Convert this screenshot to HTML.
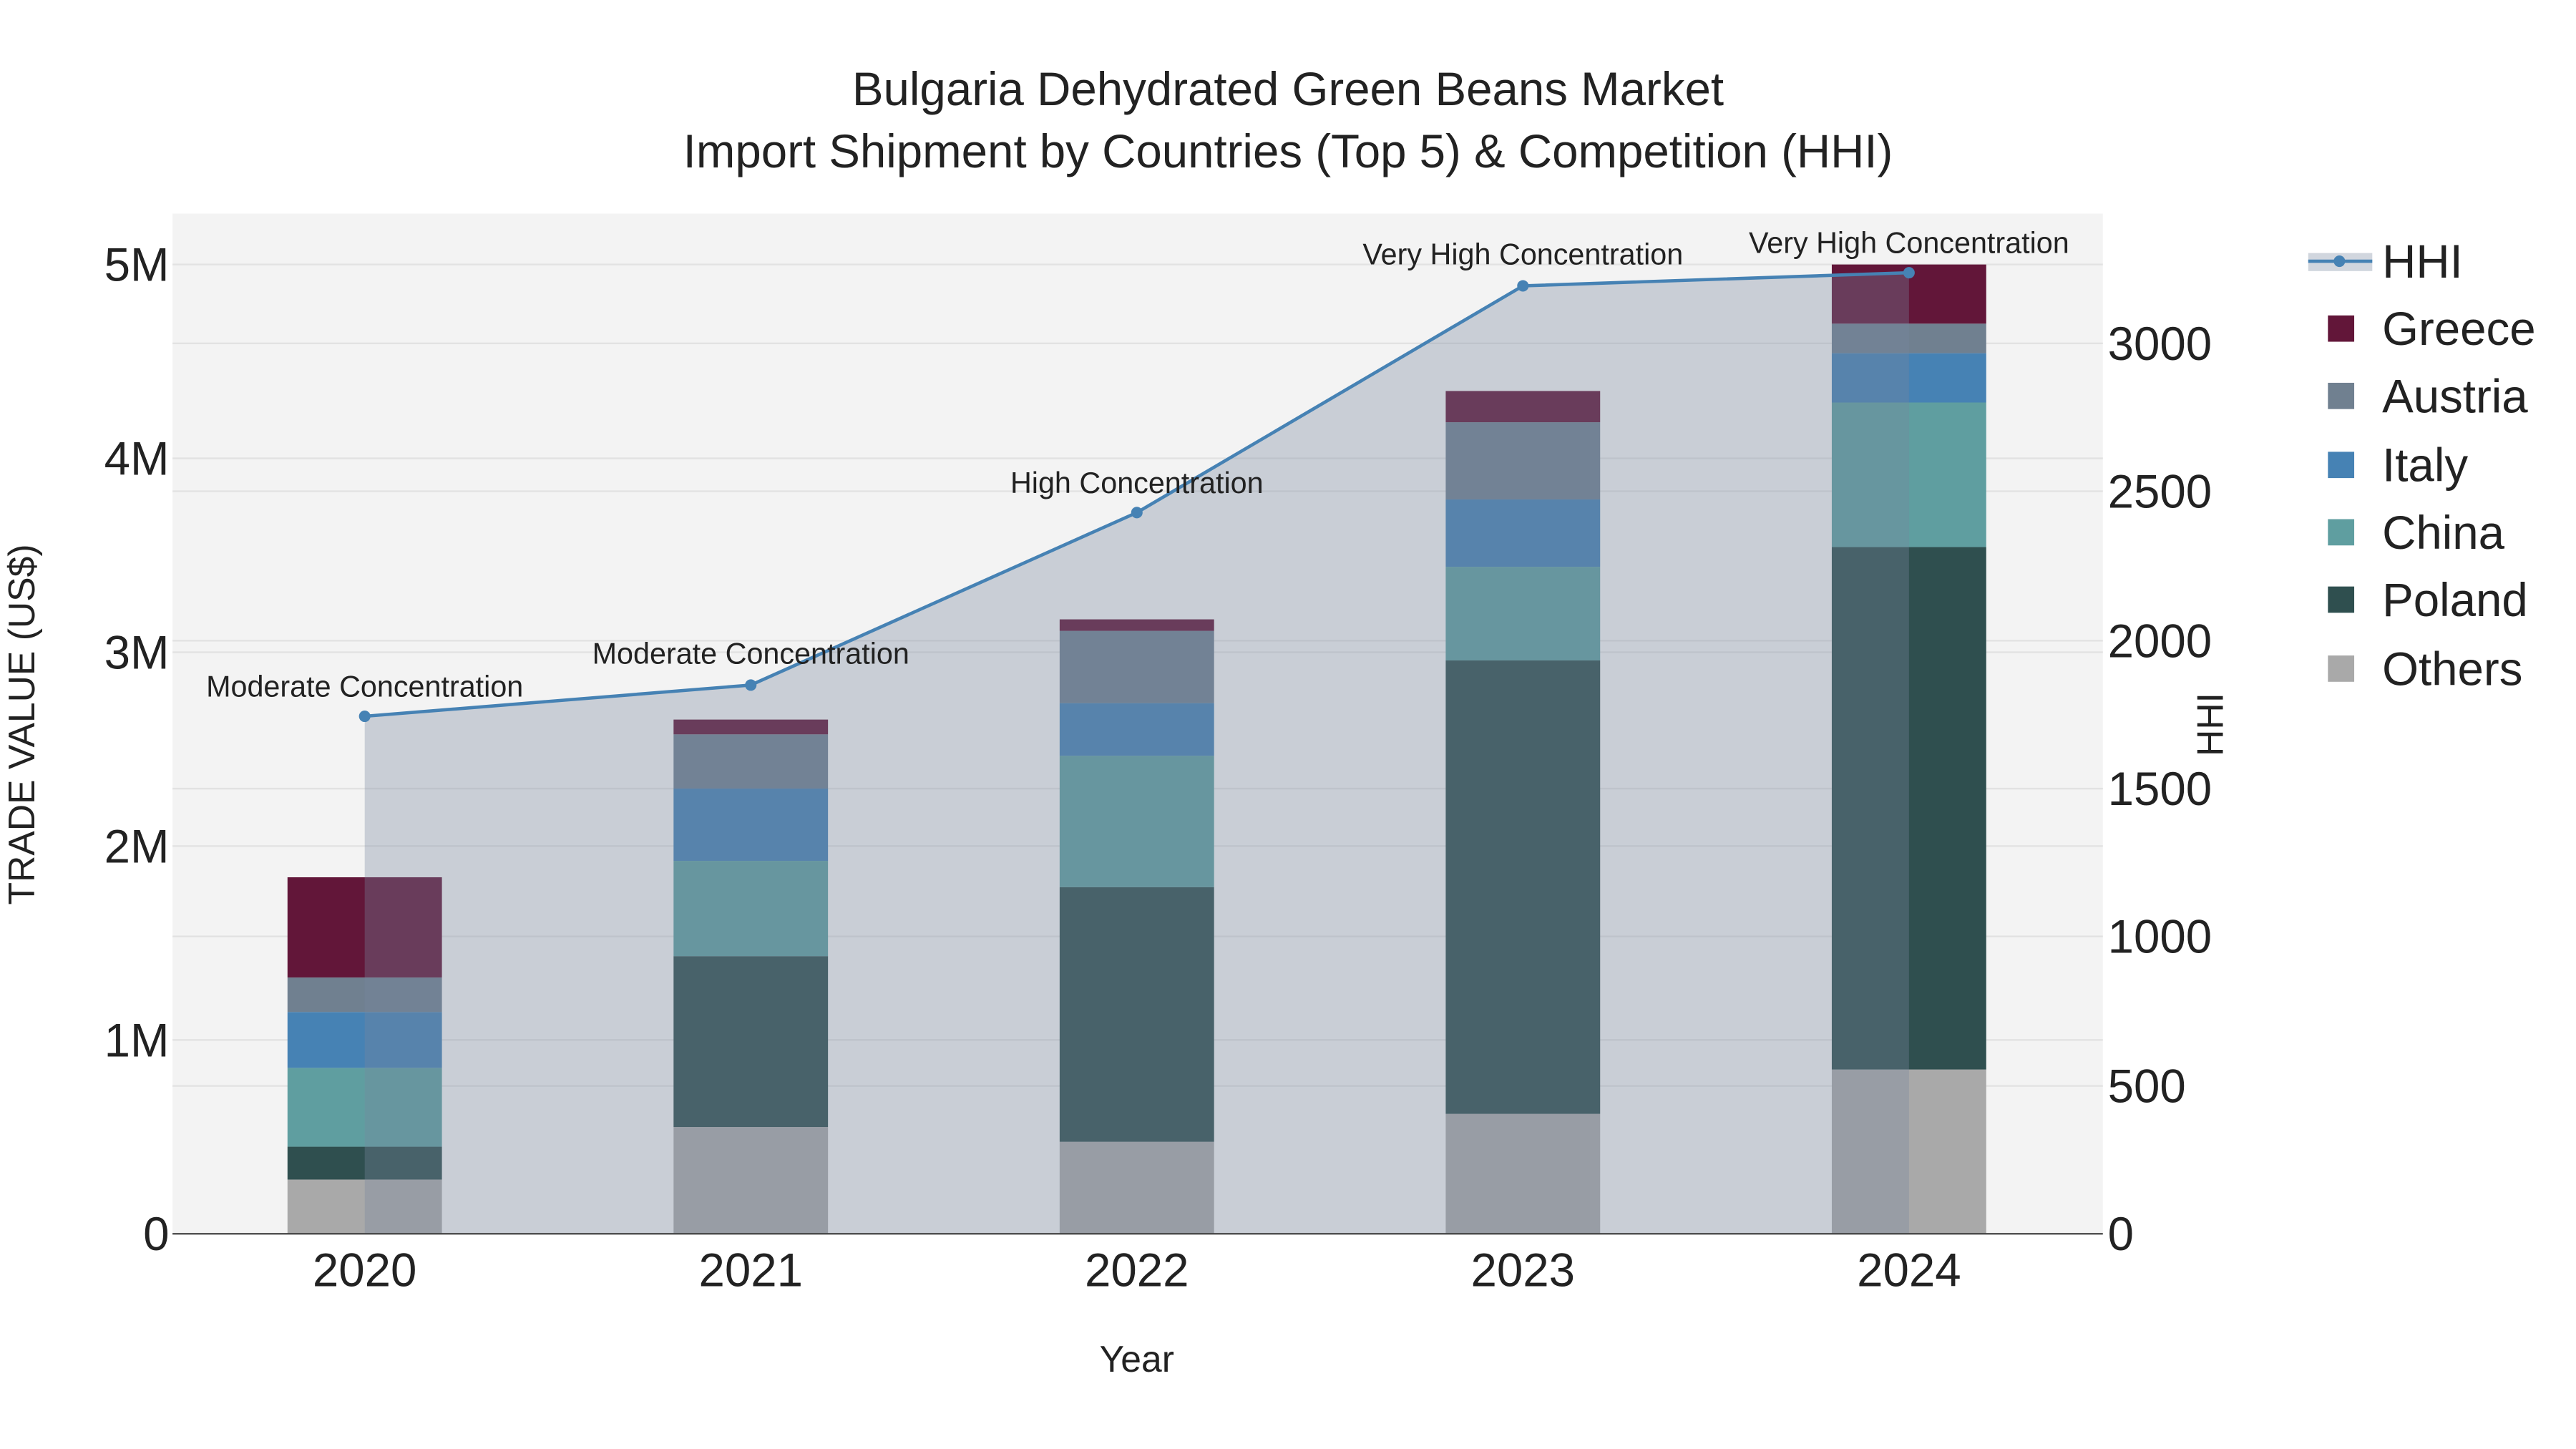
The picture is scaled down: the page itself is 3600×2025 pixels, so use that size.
<!DOCTYPE html>
<html><head><meta charset="utf-8"><style>
html,body{margin:0;padding:0;background:#fff;}
svg{display:block;}
text{font-family:"Liberation Sans",sans-serif;fill:#222;}
</style></head><body>
<svg width="3600" height="2025" viewBox="0 0 1568 882" xmlns="http://www.w3.org/2000/svg">
<rect x="0" y="0" width="1568" height="882" fill="#fff"/>
<rect x="105" y="130" width="1175" height="621" fill="#f3f3f3"/>
<g stroke="#e2e2e2" stroke-width="1">
<line x1="105" x2="1280" y1="633" y2="633"/><line x1="105" x2="1280" y1="515" y2="515"/>
<line x1="105" x2="1280" y1="397" y2="397"/><line x1="105" x2="1280" y1="279" y2="279"/>
<line x1="105" x2="1280" y1="161" y2="161"/>
<line x1="105" x2="1280" y1="661" y2="661"/><line x1="105" x2="1280" y1="570" y2="570"/>
<line x1="105" x2="1280" y1="480" y2="480"/><line x1="105" x2="1280" y1="390" y2="390"/>
<line x1="105" x2="1280" y1="299" y2="299"/><line x1="105" x2="1280" y1="209" y2="209"/>
</g>
<g>
<rect x="175" y="718" width="94" height="33" fill="#a9a9a9"/>
<rect x="175" y="698" width="94" height="20" fill="#2f4f4f"/>
<rect x="175" y="650" width="94" height="48" fill="#5f9ea0"/>
<rect x="175" y="616" width="94" height="34" fill="#4682b4"/>
<rect x="175" y="595" width="94" height="21" fill="#708090"/>
<rect x="175" y="534" width="94" height="61" fill="#621639"/>

<rect x="410" y="686" width="94" height="65" fill="#a9a9a9"/>
<rect x="410" y="582" width="94" height="104" fill="#2f4f4f"/>
<rect x="410" y="524" width="94" height="58" fill="#5f9ea0"/>
<rect x="410" y="480" width="94" height="44" fill="#4682b4"/>
<rect x="410" y="447" width="94" height="33" fill="#708090"/>
<rect x="410" y="438" width="94" height="9" fill="#621639"/>

<rect x="645" y="695" width="94" height="56" fill="#a9a9a9"/>
<rect x="645" y="540" width="94" height="155" fill="#2f4f4f"/>
<rect x="645" y="460" width="94" height="80" fill="#5f9ea0"/>
<rect x="645" y="428" width="94" height="32" fill="#4682b4"/>
<rect x="645" y="384" width="94" height="44" fill="#708090"/>
<rect x="645" y="377" width="94" height="7" fill="#621639"/>

<rect x="880" y="678" width="94" height="73" fill="#a9a9a9"/>
<rect x="880" y="402" width="94" height="276" fill="#2f4f4f"/>
<rect x="880" y="345" width="94" height="57" fill="#5f9ea0"/>
<rect x="880" y="304" width="94" height="41" fill="#4682b4"/>
<rect x="880" y="257" width="94" height="47" fill="#708090"/>
<rect x="880" y="238" width="94" height="19" fill="#621639"/>

<rect x="1115" y="651" width="94" height="100" fill="#a9a9a9"/>
<rect x="1115" y="333" width="94" height="318" fill="#2f4f4f"/>
<rect x="1115" y="245" width="94" height="88" fill="#5f9ea0"/>
<rect x="1115" y="215" width="94" height="30" fill="#4682b4"/>
<rect x="1115" y="197" width="94" height="18" fill="#708090"/>
<rect x="1115" y="161" width="94" height="36" fill="#621639"/>
</g>
<polygon points="222,751 222,436 457,417 692,312 927,174 1162,166 1162,751" fill="rgb(120,135,158)" fill-opacity="0.34"/>
<polyline points="222,436 457,417 692,312 927,174 1162,166" fill="none" stroke="#4682b4" stroke-width="2"/>
<g fill="#4682b4"><circle cx="222" cy="436" r="3.5"/><circle cx="457" cy="417" r="3.5"/><circle cx="692" cy="312" r="3.5"/><circle cx="927" cy="174" r="3.5"/><circle cx="1162" cy="166" r="3.5"/></g>
<line x1="105" x2="1280" y1="751" y2="751" stroke="#444" stroke-width="1"/>
<g font-size="18" text-anchor="middle">
<text x="222" y="424">Moderate Concentration</text>
<text x="457" y="404">Moderate Concentration</text>
<text x="692" y="300">High Concentration</text>
<text x="927" y="161">Very High Concentration</text>
<text x="1162" y="154">Very High Concentration</text>
</g>
<g font-size="28.5" text-anchor="middle">
<text x="784" y="64">Bulgaria Dehydrated Green Beans Market</text>
<text x="784" y="102">Import Shipment by Countries (Top 5) &amp; Competition (HHI)</text>
</g>
<g font-size="28.5" text-anchor="end">
<text x="103" y="761">0</text><text x="103" y="643">1M</text><text x="103" y="525">2M</text>
<text x="103" y="407">3M</text><text x="103" y="289">4M</text><text x="103" y="171">5M</text>
</g>
<g font-size="28.5" text-anchor="start">
<text x="1283" y="761">0</text><text x="1283" y="671">500</text><text x="1283" y="580">1000</text>
<text x="1283" y="490">1500</text><text x="1283" y="400">2000</text><text x="1283" y="309">2500</text><text x="1283" y="219">3000</text>
</g>
<g font-size="28.5" text-anchor="middle">
<text x="222" y="783">2020</text><text x="457" y="783">2021</text><text x="692" y="783">2022</text>
<text x="927" y="783">2023</text><text x="1162" y="783">2024</text>
</g>
<text x="692" y="835" font-size="22.5" text-anchor="middle">Year</text>
<text transform="translate(21,441) rotate(-90)" font-size="22.5" text-anchor="middle">TRADE VALUE (US$)</text>
<text transform="translate(1353,441) rotate(-90)" font-size="22.5" text-anchor="middle">HHI</text>
<rect x="1405" y="154" width="39" height="11" fill="rgb(120,135,158)" fill-opacity="0.34"/>
<line x1="1405" x2="1444" y1="159" y2="159" stroke="#4682b4" stroke-width="2"/>
<circle cx="1424" cy="159" r="3.5" fill="#4682b4"/>
<rect x="1417" y="192" width="16" height="16" fill="#621639"/>
<rect x="1417" y="233" width="16" height="16" fill="#708090"/>
<rect x="1417" y="275" width="16" height="16" fill="#4682b4"/>
<rect x="1417" y="316" width="16" height="16" fill="#5f9ea0"/>
<rect x="1417" y="357" width="16" height="16" fill="#2f4f4f"/>
<rect x="1417" y="399" width="16" height="16" fill="#a9a9a9"/>
<g font-size="28.5">
<text x="1450" y="169">HHI</text><text x="1450" y="210">Greece</text><text x="1450" y="251">Austria</text>
<text x="1450" y="293">Italy</text><text x="1450" y="334">China</text><text x="1450" y="375">Poland</text><text x="1450" y="417">Others</text>
</g>
</svg>
</body></html>
